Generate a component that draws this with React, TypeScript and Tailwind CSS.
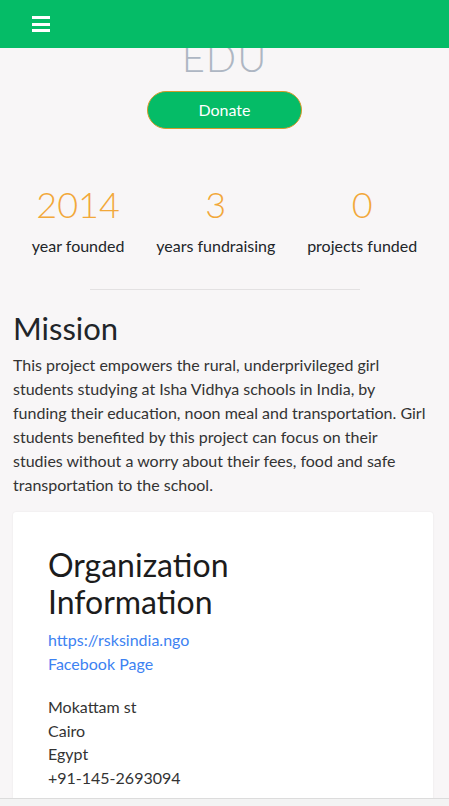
export default function App() {
  const stats = [
    { value: '2014', label: 'year founded' },
    { value: '3', label: 'years fundraising' },
    { value: '0', label: 'projects funded' },
  ];

  return (
    <div className="h-[806px] w-full overflow-hidden bg-[#f8f6f7] flex flex-col font-['Lato',sans-serif] text-[#212529]">
      <header className="h-12 shrink-0 bg-[#05bc67] flex items-center pl-8">
        <div className="flex flex-col gap-[3.5px]">
          <span className="block w-[18px] h-[3px] bg-white" />
          <span className="block w-[18px] h-[3px] bg-white" />
          <span className="block w-[18px] h-[3px] bg-white" />
        </div>
      </header>

      <main className="flex-1 overflow-hidden flex flex-col">
        <div className="-mt-[11px] text-center text-[40px] leading-[40px] font-light text-[#aeb6c3] tracking-[1px]">
          EDU
        </div>

        <div className="flex justify-center mt-[14px]">
          <button className="w-[155px] h-[38px] rounded-full bg-[#05bc67] border border-[#d49a2a] text-white text-base">
            Donate
          </button>
        </div>

        <div className="flex justify-evenly mt-[55px]">
          {stats.map((s) => (
            <div key={s.label} className="flex flex-col items-center">
              <div className="text-[36px] leading-[40px] text-[#f2a83a] font-light">{s.value}</div>
              <div className="mt-[10px] text-base leading-6">{s.label}</div>
            </div>
          ))}
        </div>

        <div className="mx-auto mt-[31px] w-[270px] border-t border-[#e3e1e2]" />

        <section className="pl-[13px] pr-4 mt-[19px]">
          <h2 className="text-[31px] leading-[38px] font-normal">Mission</h2>
          <p className="mt-[6px] text-base leading-6 text-[#333]">
            This project empowers the rural, underprivileged girl
            <br />
            students studying at Isha Vidhya schools in India, by
            <br />
            funding their education, noon meal and transportation. Girl
            <br />
            students benefited by this project can focus on their
            <br />
            studies without a worry about their fees, food and safe
            <br />
            transportation to the school.
          </p>

          <div className="mt-[15px] bg-white rounded-[3px] shadow-[0_0_2px_rgba(0,0,0,0.08)] px-[35px] pt-[34px] pb-10">
            <h2 className="text-[32px] leading-[37px] font-normal text-[#1c1c1c]">
              Organization
              <br />
              Information
            </h2>
            <div className="mt-[8px] text-base leading-6">
              <a className="block text-[#3d82f2]">https://rsksindia.ngo</a>
              <a className="block text-[#3d82f2]">Facebook Page</a>
            </div>
            <div className="mt-[19px] text-base leading-[23.5px] text-[#333]">
              <div>Mokattam st</div>
              <div>Cairo</div>
              <div>Egypt</div>
              <div>+91-145-2693094</div>
            </div>
          </div>
        </section>
      </main>

      <div className="h-2 shrink-0 bg-[#f3f3f3] border-t border-[#dcdcdc]" />
    </div>
  );
}
